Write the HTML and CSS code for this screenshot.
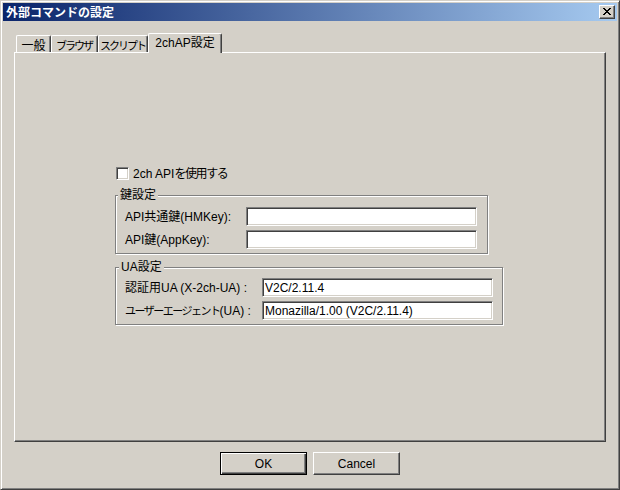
FILE: index.html
```html
<!DOCTYPE html>
<html lang="ja">
<head>
<meta charset="utf-8">
<title>外部コマンドの設定</title>
<link rel="stylesheet" href="styles.css">
</head>
<body>
<div class="window">
  <div class="titlebar">
    <span class="title">外部コマンドの設定</span>
    <span class="close-btn">
      <svg width="8" height="7" viewBox="0 0 8 7"><path d="M0 0h2v1h1v1h2v-1h1v-1h2v1h-1v1h-1v1h-1v1h1v1h1v1h1v1h-2v-1h-1v-1h-2v1h-1v1h-2v-1h1v-1h1v-1h1v-1h-1v-1h-1v-1h-1z" fill="#000"/></svg>
    </span>
  </div>
  <div class="body">
    <div class="tabs">
      <div class="tab t1">一般</div>
      <div class="tab t2 kana">ブラウザ</div>
      <div class="tab t3 kana">スクリプト</div>
      <div class="tab active">2chAP設定</div>
    </div>
    <div class="panel">
      <div class="check-row">
        <span class="checkbox"></span>
        <span class="check-label">2ch API<span class="narrow">を使用する</span></span>
      </div>
      <div class="group g1">
        <span class="legend">鍵設定</span>
        <div class="form-grid">
          <label class="lbl">API共通鍵(HMKey):</label>
          <input class="edit" type="text" value="">
          <label class="lbl">API鍵(AppKey):</label>
          <input class="edit" type="text" value="">
        </div>
      </div>
      <div class="group g2">
        <span class="legend">UA設定</span>
        <div class="form-grid">
          <label class="lbl">認証用UA (X-2ch-UA) :</label>
          <input class="edit" type="text" value="V2C/2.11.4">
          <label class="lbl"><span class="narrow-kana">ユーザーエージェント</span>(UA) :</label>
          <input class="edit" type="text" value="Monazilla/1.00 (V2C/2.11.4)">
        </div>
      </div>
    </div>
    <div class="buttons">
      <button class="btn default">OK</button>
      <button class="btn">Cancel</button>
    </div>
  </div>
</div>
</body>
</html>
```
FILE: styles.css
```css
html, body {
  margin: 0;
  padding: 0;
  background: #D4D0C8;
}
body {
  font-family: "Liberation Sans", "Noto Sans CJK JP", sans-serif;
  font-size: 12px;
  color: #000;
}
.window {
  width: 620px;
  height: 490px;
  box-sizing: border-box;
  background: #D4D0C8;
  border: 1px solid;
  border-color: #D4D0C8 #404040 #404040 #D4D0C8;
  box-shadow: inset 1px 1px 0 #fff, inset -1px -1px 0 #808080;
  padding: 2px;
}
.titlebar {
  height: 18px;
  display: flex;
  align-items: center;
  justify-content: space-between;
  background: linear-gradient(to right, #0A246A, #A6CAF0);
  padding: 0 2px 0 3px;
}
.title {
  color: #fff;
  font-weight: bold;
  font-size: 12px;
  line-height: 18px;
  font-family: "Noto Sans CJK JP", sans-serif;
}
.close-btn {
  width: 16px;
  height: 14px;
  box-sizing: border-box;
  background: #D4D0C8;
  border: 1px solid;
  border-color: #fff #404040 #404040 #fff;
  box-shadow: inset -1px -1px 0 #808080;
  display: flex;
  align-items: center;
  justify-content: center;
  padding: 0 1px 1px 0;
}
.close-btn svg { display: block; }
.body {
  padding: 12px 11px 0;
}
.tabs {
  height: 19px;
  display: flex;
  align-items: flex-end;
  padding-left: 2px;
}
.tab {
  height: 17px;
  box-sizing: border-box;
  border-top: 1px solid #fff;
  border-left: 1px solid #fff;
  border-right: 1px solid #404040;
  box-shadow: inset -1px 0 0 #808080;
  border-radius: 2px 2px 0 0;
  display: flex;
  align-items: center;
  justify-content: center;
  font-family: "Noto Sans CJK JP", sans-serif;
  line-height: 14px;
  padding-top: 1px;
  white-space: nowrap;
}
.tab.kana {
  font-size: 11px;
  letter-spacing: -2px;
  padding-right: 1px;
}
.t1 { width: 35px; }
.t2 { width: 47px; }
.t3 { width: 50px; }
.tab.active {
  width: 74px;
  height: 20px;
  margin-bottom: -1px;
  background: #D4D0C8;
  position: relative;
  z-index: 1;
  font-family: "Liberation Sans", "Noto Sans CJK JP", sans-serif;
  padding-top: 0;
  padding-bottom: 2px;
}
.panel {
  height: 390px;
  box-sizing: border-box;
  border: 1px solid;
  border-color: #fff #404040 #404040 #fff;
  box-shadow: inset -1px -1px 0 #808080;
  padding: 114px 0 0 100px;
}
.check-row {
  display: flex;
  align-items: center;
  height: 13px;
  margin-left: 1px;
}
.checkbox {
  width: 13px;
  height: 13px;
  box-sizing: border-box;
  background: #fff;
  border: 1px solid;
  border-color: #808080 #fff #fff #808080;
  box-shadow: inset 1px 1px 0 #404040, inset -1px -1px 0 #D4D0C8;
}
.check-label {
  margin-left: 4px;
  line-height: 14px;
  white-space: nowrap;
}
.narrow {
  letter-spacing: -1.4px;
}
.narrow-kana {
  font-size: 11px;
  letter-spacing: -1.5px;
}
.group {
  position: relative;
  box-sizing: border-box;
  border: 1px solid #808080;
  box-shadow: 1px 1px 0 #fff, inset 1px 1px 0 #fff;
}
.g1 {
  width: 373px;
  height: 59px;
  margin-top: 15px;
  padding: 11px 10px 4px 9px;
}
.g2 {
  width: 388px;
  height: 58px;
  margin-top: 13px;
  padding: 10px 9px 4px 9px;
}
.legend {
  position: absolute;
  top: -8px;
  left: 2px;
  padding: 0 2px;
  background: #D4D0C8;
  line-height: 14px;
}
.g2 .legend { left: 3px; }
.form-grid {
  display: grid;
  row-gap: 4px;
  align-items: center;
}
.g1 .form-grid { grid-template-columns: 121px 231px; }
.g2 .form-grid { grid-template-columns: 137px 231px; }
.lbl {
  line-height: 14px;
  white-space: nowrap;
}
.edit {
  width: 231px;
  height: 19px;
  box-sizing: border-box;
  margin: 0;
  padding: 0 0 0 2px;
  font: 12px "Liberation Sans", "Noto Sans CJK JP", sans-serif;
  color: #000;
  background: #fff;
  border: 1px solid;
  border-color: #808080 #fff #fff #808080;
  box-shadow: inset 1px 1px 0 #404040, inset -1px -1px 0 #D4D0C8;
  outline: none;
}
.buttons {
  display: flex;
  justify-content: center;
  gap: 6px;
  margin-top: 10px;
}
.btn {
  width: 87px;
  height: 23px;
  box-sizing: border-box;
  margin: 0;
  padding: 0;
  font: 12px "Liberation Sans", sans-serif;
  color: #000;
  background: #D4D0C8;
  border: 1px solid;
  border-color: #fff #404040 #404040 #fff;
  box-shadow: inset -1px -1px 0 #808080;
}
.btn.default {
  border: 1px solid #000;
  box-shadow: inset 1px 1px 0 #fff, inset -1px -1px 0 #404040, inset -2px -2px 0 #808080;
}
```
